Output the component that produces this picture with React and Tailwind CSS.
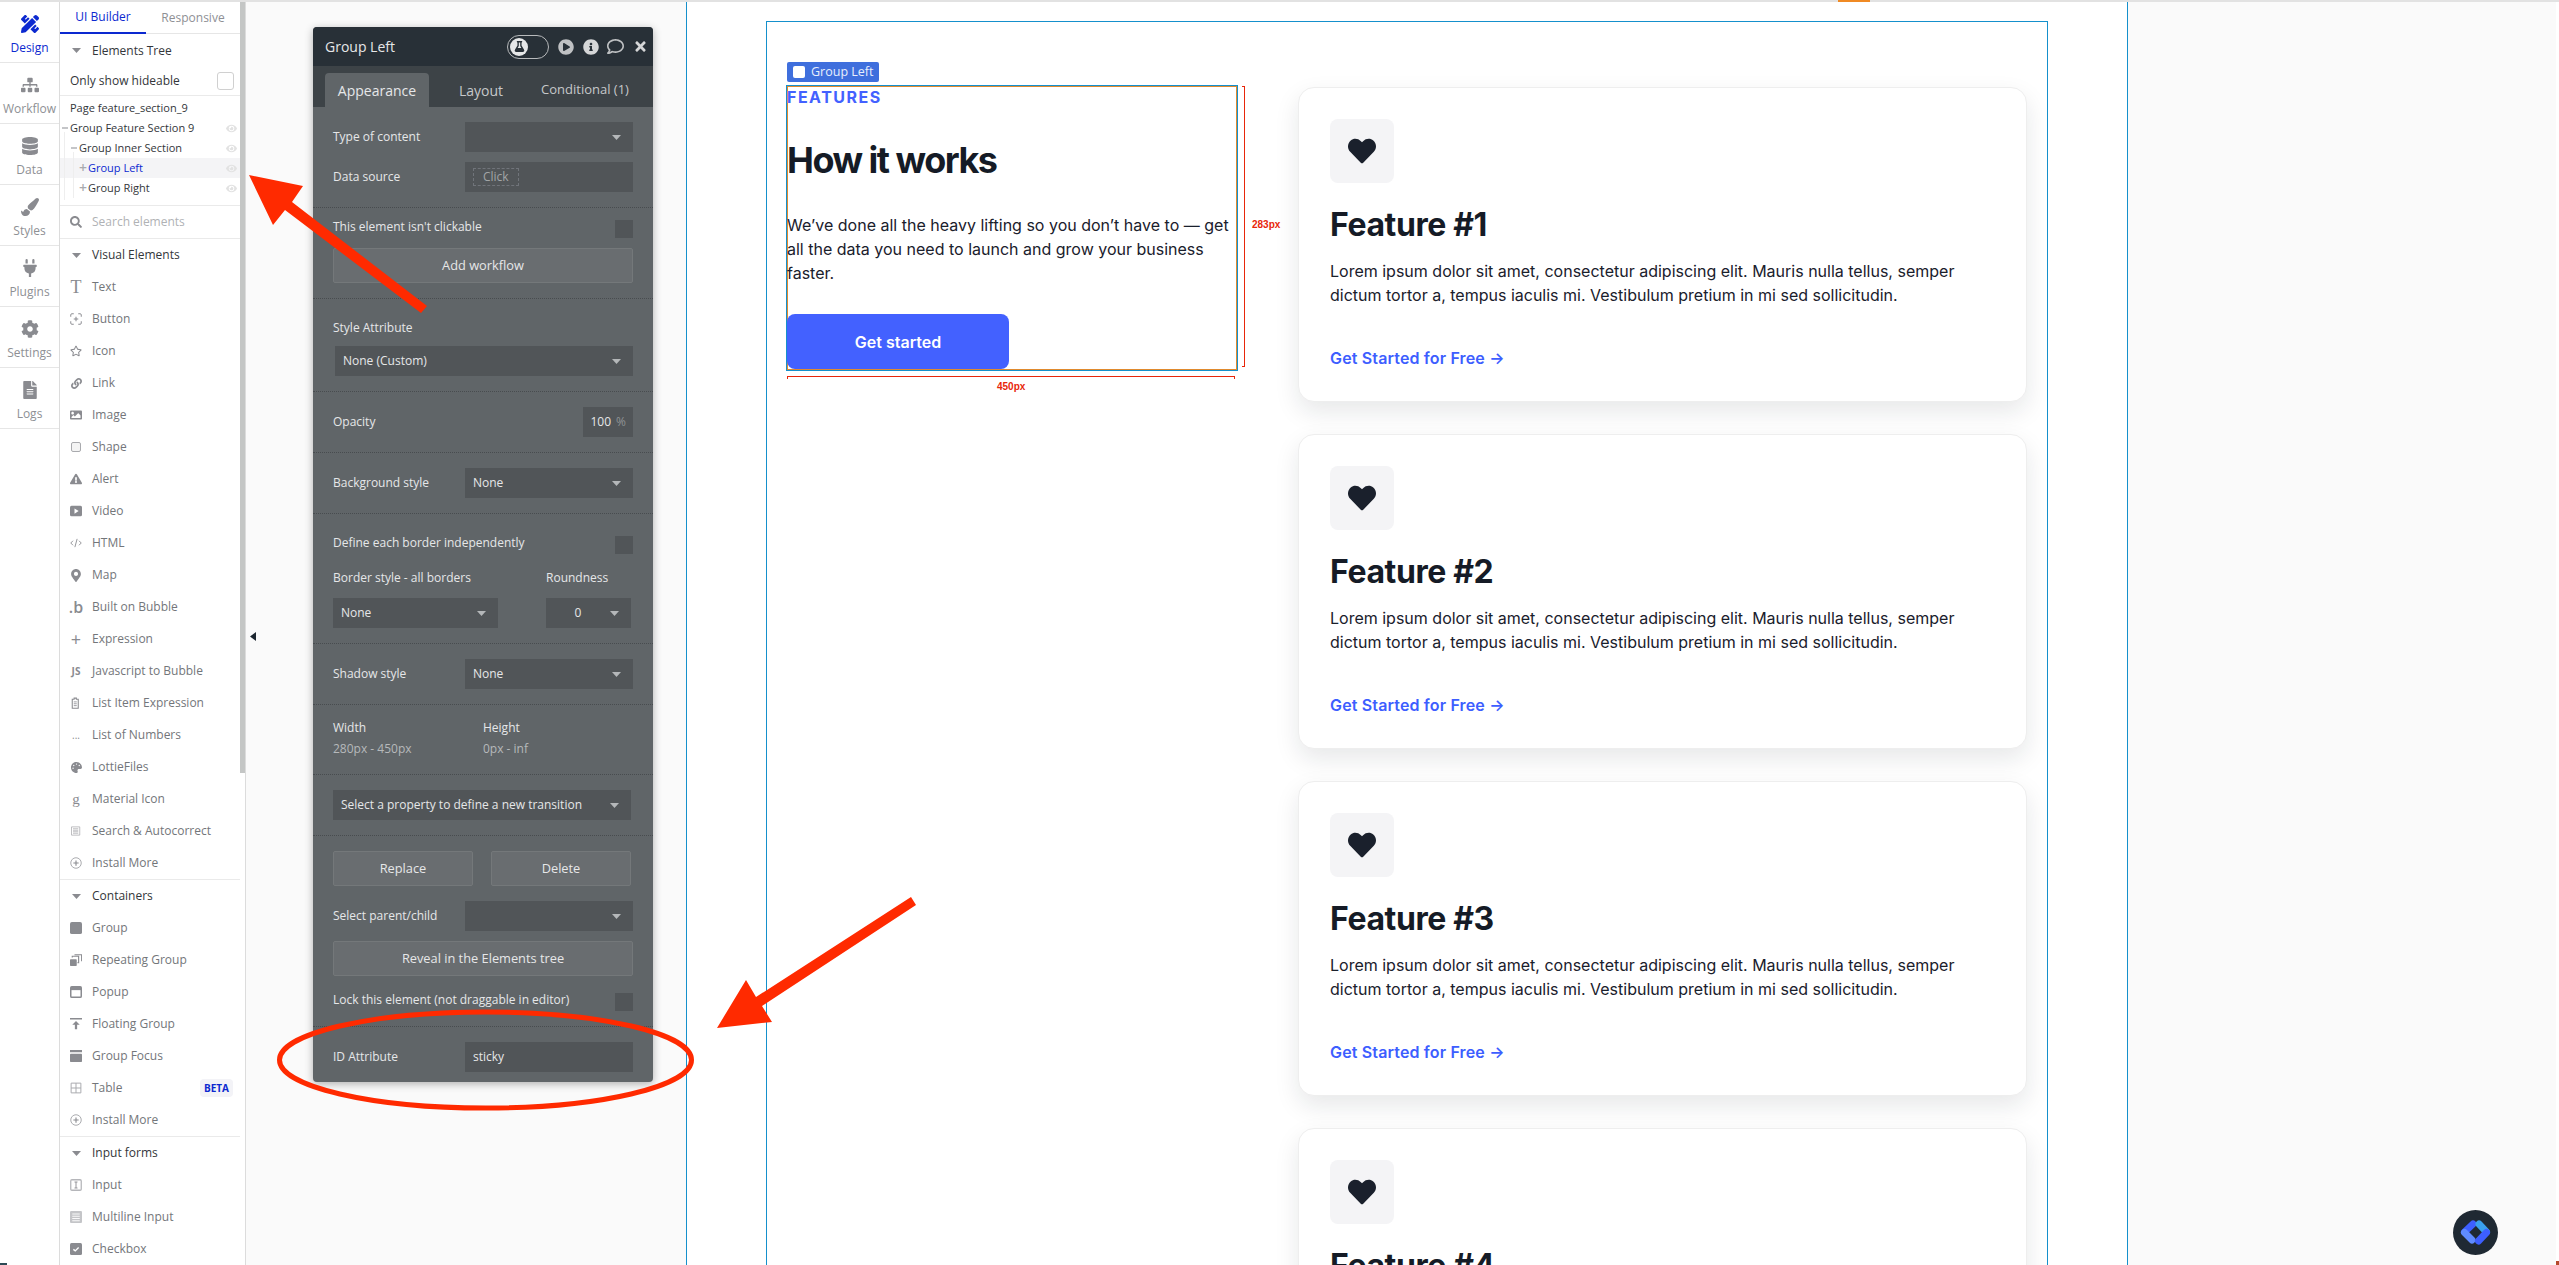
import {
  FaPencilRuler, FaSitemap, FaDatabase, FaPaintBrush, FaPlug, FaCog, FaFileAlt, FaHeart, FaEye, FaSearch,
  FaRegStar, FaLink, FaImage, FaExclamationTriangle, FaPalette, FaFlask, FaPlayCircle,
  FaInfoCircle, FaRegComment, FaTimes, FaMapMarkerAlt,
} from 'react-icons/fa';

const BLUE = 'text-[#0c29d0]';

// Small drawn icons for the element list (12px box)
const Svg = ({ children }) => (
  <svg width="12" height="12" viewBox="0 0 16 16" fill="#8a8b90">{children}</svg>
);
const IconBtn = () => (
  <Svg>
    <path d="M1 5V2.500Q1 1 2.500 1H5M11 1h2.500Q15 1 15 2.500V5M15 11v2.500q0 1.500-1.500 1.500H11M5 15H2.500Q1 15 1 13.500V11" fill="none" stroke="#8a8b90" strokeWidth="1.300" />
    <path d="M5 8h6M8 5v6" stroke="#8a8b90" strokeWidth="1.400" />
  </Svg>
);
const IconShape = () => <svg width="10" height="10" viewBox="0 0 10 10"><rect x="0.500" y="0.500" width="9" height="9" rx="1.500" fill="#f4f4f4" stroke="#a9aaae" /></svg>;
const IconVideo = () => <Svg><rect x="0" y="1" width="16" height="14" rx="2" /><path d="M6 4.500l5.500 3.500L6 11.500z" fill="#fff" /></Svg>;
const IconHtml = () => <Svg><path d="M4 5L1 8l3 3M12 5l3 3-3 3M9.500 2.500l-3 11" fill="none" stroke="#8a8b90" strokeWidth="1.200" /></Svg>;
const IconClip = () => <Svg><path d="M3 3h2.500V1.500h3V3H11v12H3z" fill="none" stroke="#8a8b90" strokeWidth="1.400" /><path d="M5 6.500h4M5 9h4M5 11.500h4" stroke="#8a8b90" strokeWidth="1.100" /></Svg>;
const IconList = () => <Svg><path d="M2 2.500h11v11H2zM4 5h7M4 7h7M4 9h7M4 11h7" fill="none" stroke="#a9aaae" strokeWidth="1" /></Svg>;
const IconInstall = () => <Svg><circle cx="8" cy="8" r="7" fill="none" stroke="#a9aaae" strokeWidth="1.300" /><path d="M4.500 8h7M8 4.500v7" stroke="#8a8b90" strokeWidth="1.500" /></Svg>;
const IconGroup = () => <Svg><rect width="16" height="16" x="0" y="0" rx="2.500" /></Svg>;
const IconRepeat = () => <Svg><rect x="0" y="7" width="9" height="9" rx="1" /><path d="M3 4.500V3h8.500v8.500H10M6 1h9.500v8.500" fill="none" stroke="#8a8b90" strokeWidth="1.500" /></Svg>;
const IconPopup = () => <Svg><rect x="1" y="1" width="14" height="14" rx="1.500" fill="none" stroke="#8a8b90" strokeWidth="2" /><rect x="1" y="1" width="14" height="4.500" /></Svg>;
const IconFloat = () => <Svg><rect x="0" y="0" width="16" height="2" /><path d="M8 4l5 5h-3.500v6h-3V9H3z" /></Svg>;
const IconFocus = () => <Svg><rect x="0" y="0" width="16" height="3" /><rect x="0" y="5" width="16" height="11" rx="1" /></Svg>;
const IconTable = () => <Svg><path d="M1.500 1.500h13v13h-13zM8 1.500v13M1.500 8h13" fill="none" stroke="#a9aaae" strokeWidth="1.300" /></Svg>;
const IconInput = () => <Svg><rect x="1" y="1" width="14" height="14" rx="1.500" fill="none" stroke="#b5b6ba" strokeWidth="1.700" /><path d="M6 4h4M6 12h4M8 4v8" stroke="#8a8b90" strokeWidth="1.200" /></Svg>;
const IconMulti = () => <Svg><rect x="0" y="0" width="16" height="16" rx="1.500" fill="#c4c5c8" /><path d="M3 4h10M3 7h10M3 10h10M3 13h10" stroke="#fff" strokeWidth="1.200" /></Svg>;
const IconCheckbox = () => <Svg><rect x="0" y="0" width="16" height="16" rx="2" /><path d="M4.500 8.500l2.500 2 4.500-4.500" fill="none" stroke="#fff" strokeWidth="1.800" /></Svg>;
const fa = (I, size = 12) => <I size={size} color="#8a8b90" />;
const glyph = (text, cls) => <span className={`text-[#8a8b90] leading-none ${cls}`}>{text}</span>;

const visualItems = [
  ['Text', glyph('T', "font-['Liberation_Serif',serif] text-[18px]")],
  ['Button', <IconBtn />],
  ['Icon', fa(FaRegStar)],
  ['Link', fa(FaLink, 11)],
  ['Image', fa(FaImage)],
  ['Shape', <IconShape />],
  ['Alert', fa(FaExclamationTriangle)],
  ['Video', <IconVideo />],
  ['HTML', <IconHtml />],
  ['Map', fa(FaMapMarkerAlt, 13)],
  ['Built on Bubble', glyph('.b', 'text-[16px] font-semibold')],
  ['Expression', glyph('+', 'text-[18px]')],
  ['Javascript to Bubble', glyph('JS', 'text-[10px] font-bold')],
  ['List Item Expression', <IconClip />],
  ['List of Numbers', glyph('...', 'text-[10px]')],
  ['LottieFiles', fa(FaPalette, 11)],
  ['Material Icon', glyph('g', "font-['Liberation_Serif',serif] text-[15px]")],
  ['Search & Autocorrect', <IconList />],
  ['Install More', <IconInstall />],
];
const containerItems = [
  ['Group', <IconGroup />],
  ['Repeating Group', <IconRepeat />],
  ['Popup', <IconPopup />],
  ['Floating Group', <IconFloat />],
  ['Group Focus', <IconFocus />],
  ['Table', <IconTable />],
  ['Install More', <IconInstall />],
];
const inputItems = [
  ['Input', <IconInput />],
  ['Multiline Input', <IconMulti />],
  ['Checkbox', <IconCheckbox />],
];

const railItems = [
  ['Design', FaPencilRuler, true],
  ['Workflow', FaSitemap],
  ['Data', FaDatabase],
  ['Styles', FaPaintBrush],
  ['Plugins', FaPlug],
  ['Settings', FaCog],
  ['Logs', FaFileAlt],
];

function Rail() {
  return (
    <nav className="w-[60px] shrink-0 border-r border-[#dcdcdc] bg-white">
      {railItems.map(([label, Icon, active]) => (
        <div key={label} className="h-[61px] border-b border-[#e6e6e6] flex flex-col items-center pt-[13px]">
          <Icon size={18} color={active ? '#0c29d0' : '#8a8b90'} />
          <span className={`mt-[6px] text-[12px] leading-[18px] ${active ? BLUE : 'text-[#8e9094]'}`}>{label}</span>
        </div>
      ))}
    </nav>
  );
}

const Caret = ({ color = '#8a8b90' }) => (
  <svg width="9" height="5" viewBox="0 0 9 5"><path d="M0 0h9L4.500 5z" fill={color} /></svg>
);

function SectionHead({ label, className = 'h-[32px]' }) {
  return (
    <div className={`flex items-center text-[12px] text-[#33363a] ${className}`}>
      <span className="w-[32px] pl-[12px] flex"><Caret /></span>
      {label}
    </div>
  );
}

function ItemRows({ items }) {
  return items.map(([label, icon]) => (
    <div key={label} className="h-[32px] flex items-center text-[12px] text-[#73767a]">
      <span className="w-[32px] pl-[10px] flex">
        <span className="w-[12px] flex justify-center">{icon}</span>
      </span>
      {label}
      {label === 'Table' && (
        <span className="ml-auto mr-[7px] rounded-[4px] bg-[#f3f3f7] px-[4px] h-[18px] flex items-center text-[10px] font-bold text-[#0c29d0]">BETA</span>
      )}
    </div>
  ));
}

function TreeRow({ label, pad, mark, active, eye = true }) {
  return (
    <div className={`h-[20px] flex items-center text-[11px] text-[#33363a] ${pad} ${active ? 'bg-[#f4f4f6]' : ''}`}>
      {mark === '-' && <span className="w-[6px] h-[2px] bg-[#c4c5c8] mr-[2px]" />}
      {mark === '+' && <span className="text-[#a9aaae] text-[14px] leading-none w-[9px] font-semibold">+</span>}
      <span className={active ? BLUE : ''}>{label}</span>
      {eye && <FaEye size={11} color="#e2e2e2" className="ml-auto mr-[3px]" />}
    </div>
  );
}

function ElementsPanel() {
  return (
    <aside className="w-[186px] shrink-0 flex border-r border-[#dcdcdc] bg-white">
      <div className="w-[180px] shrink-0">
        <div className="h-[32px] flex border-b border-[#e6e6e6] text-[12px]">
          <div className={`w-[86px] -mb-px flex items-center justify-center border-b-2 border-[#0c29d0] ${BLUE}`}>UI Builder</div>
          <div className="flex-1 flex items-center justify-center text-[#8e9094]">Responsive</div>
        </div>
        <SectionHead label="Elements Tree" className="h-[33px]" />
        <div className="h-[29px] flex items-center justify-between pl-[10px] pr-[6px] border-b border-[#eaeaea] text-[12px] text-[#33363a]">
          Only show hideable
          <span className="w-[17px] h-[18px] rounded-[3px] border border-[#d0d0d0]" />
        </div>
        <div className="relative pt-[2px] pb-[7px] border-b border-[#eaeaea]">
          <span className="absolute left-[4px] top-[36px] w-px h-[68px] bg-[#eeeeee]" />
          <span className="absolute left-[13px] top-[56px] w-px h-[46px] bg-[#eeeeee]" />
          <TreeRow label="Page feature_section_9" pad="pl-[10px]" eye={false} />
          <TreeRow label="Group Feature Section 9" pad="pl-[2px]" mark="-" />
          <TreeRow label="Group Inner Section" pad="pl-[11px]" mark="-" />
          <TreeRow label="Group Left" pad="pl-[19px]" mark="+" active />
          <TreeRow label="Group Right" pad="pl-[19px]" mark="+" />
        </div>
        <div className="h-[33px] flex items-center border-b border-[#eaeaea] text-[12px] text-[#b0b2b5]">
          <span className="w-[32px] pl-[10px]"><FaSearch size={12} color="#8a8b90" /></span>
          Search elements
        </div>
        <SectionHead label="Visual Elements" />
        <div className="border-b border-[#eaeaea]"><ItemRows items={visualItems} /></div>
        <SectionHead label="Containers" />
        <div className="border-b border-[#eaeaea]"><ItemRows items={containerItems} /></div>
        <SectionHead label="Input forms" />
        <ItemRows items={inputItems} />
      </div>
      <div className="w-[5px] h-[771px] bg-[#c4c6c5]" />
    </aside>
  );
}

function Select({ value, width = 'w-[168px]', center }) {
  return (
    <div className={`${width} h-[30px] bg-[#515558] flex items-center pl-2 pr-[12px] text-[12px] text-[#e6e7e8]`}>
      <span className={center ? 'flex-1 text-center pl-[8px] pr-[16px]' : 'flex-1'}>{value}</span>
      <Caret color="#b4b7b9" />
    </div>
  );
}

const Label = ({ children, className = '' }) => <span className={`block text-[12px] leading-[18px] text-[#e6e7e8] ${className}`}>{children}</span>;

const Section = ({ className = '', children }) => (
  <div className={`px-[20px] border-b border-dotted border-[#484c4f] ${className}`}>{children}</div>
);

const Row = ({ label, children, className = '', labelClass }) => (
  <div className={`flex items-center justify-between ${className}`}>
    <Label className={labelClass}>{label}</Label>
    {children}
  </div>
);

const Check = () => <span className="w-[18px] h-[18px] bg-[#515558]" />;

const PanelButton = ({ children, className = '' }) => (
  <div className={`h-[35px] flex items-center justify-center rounded-[2px] border border-[#74787a] bg-[#696d70] text-[12.800px] text-[#e6e7e8] ${className}`}>
    {children}
  </div>
);

function PropertyPanel() {
  return (
    <section className="mt-[25px] ml-[67px] w-[340px] h-[1055px] shrink-0 rounded-[4px] bg-[#606568] shadow-[0_2px_8px_rgba(0,0,0,0.3)] overflow-hidden">
      <header className="h-[39px] bg-[#283037] flex items-center pl-[12px] pr-[5px] text-[14px] text-[#e6e7e8]">
        <span className="flex-1">Group Left</span>
        <span className="w-[42px] h-[24px] rounded-full border border-[#b8babc] flex items-center pl-[2px] mr-[9px]">
          <span className="w-[18px] h-[18px] rounded-full bg-[#e6e7e8] flex items-center justify-center"><FaFlask size={11} color="#283037" /></span>
        </span>
        <FaPlayCircle size={16} color="#bfc1c3" className="mr-[9px]" />
        <FaInfoCircle size={16} color="#d5d6d7" className="mr-[8px]" />
        <FaRegComment size={17} color="#bfc1c3" className="mr-[9px]" />
        <FaTimes size={15} color="#d5d6d7" />
      </header>
      <div className="h-[41px] bg-[#3d4347] flex items-end pl-[12px] text-[14px]">
        <div className="w-[104px] h-[34px] bg-[#606568] rounded-t-[4px] flex items-center justify-center text-[#e6e7e8]">Appearance</div>
        <div className="w-[104px] h-[34px] flex items-center justify-center text-[#c6c8ca]">Layout</div>
        <div className="flex-1 h-[34px] flex items-center justify-center pr-[16px] text-[13px] text-[#c6c8ca]">Conditional (1)</div>
      </div>

      <Section className="pt-[15px] pb-[15px]">
        <Row label="Type of content"><Select /></Row>
        <Row label="Data source" className="mt-[10px]">
          <div className="w-[168px] h-[30px] bg-[#515558] flex items-center pl-2">
            <span className="h-[18px] px-[9px] flex items-center border border-dashed border-[#70747a] text-[12px] text-[#a2a5a7]">Click</span>
          </div>
        </Row>
      </Section>
      <Section className="pt-[12px] pb-[15px]">
        <Row label="This element isn't clickable" labelClass="-translate-y-[2px]"><Check /></Row>
        <PanelButton className="mt-[10px]">Add workflow</PanelButton>
      </Section>
      <Section className="pt-[20px] pb-[15px]">
        <Label>Style Attribute</Label>
        <div className="mt-[9px] ml-[2px]"><Select value="None (Custom)" width="w-[298px]" /></div>
      </Section>
      <Section className="py-[15px]">
        <Row label="Opacity">
          <div className="w-[50px] h-[30px] bg-[#515558] flex items-center justify-end pr-[7px] text-[12px] text-[#e6e7e8]">
            100<span className="ml-[5px] text-[#8f9395]">%</span>
          </div>
        </Row>
      </Section>
      <Section className="py-[15px]">
        <Row label="Background style"><Select value="None" /></Row>
      </Section>
      <Section className="pt-[22px] pb-[15px]">
        <Row label="Define each border independently" labelClass="-translate-y-[2px]"><Check /></Row>
        <div className="mt-[15px] flex">
          <div className="w-[213px]"><Label>Border style - all borders</Label></div>
          <Label>Roundness</Label>
        </div>
        <div className="mt-[11px] flex">
          <Select value="None" width="w-[165px]" />
          <div className="ml-[48px]"><Select value="0" width="w-[85px]" center /></div>
        </div>
      </Section>
      <Section className="py-[15px]">
        <Row label="Shadow style"><Select value="None" /></Row>
      </Section>
      <Section className="pt-[14px] pb-[16px]">
        <div className="flex">
          <div className="w-[150px] flex flex-col gap-[3px]">
            <Label>Width</Label>
            <span className="text-[12px] leading-[18px] text-[#b6b9bb]">280px - 450px</span>
          </div>
          <div className="flex flex-col gap-[3px]">
            <Label>Height</Label>
            <span className="text-[12px] leading-[18px] text-[#b6b9bb]">0px - inf</span>
          </div>
        </div>
      </Section>
      <Section className="py-[15px]">
        <Select value="Select a property to define a new transition" width="w-[298px]" />
      </Section>
      <Section className="pt-[15px] pb-[15px]">
        <div className="flex justify-between w-[298px]">
          <PanelButton className="w-[140px]">Replace</PanelButton>
          <PanelButton className="w-[140px]">Delete</PanelButton>
        </div>
        <Row label="Select parent/child" className="mt-[15px]"><Select /></Row>
        <PanelButton className="mt-[10px]">Reveal in the Elements tree</PanelButton>
        <Row label="Lock this element (not draggable in editor)" className="mt-[17px]" labelClass="-translate-y-[2px]"><Check /></Row>
      </Section>
      <div className="px-[20px] pt-[15px]">
        <Row label="ID Attribute">
          <div className="w-[168px] h-[30px] bg-[#515558] flex items-center pl-2 text-[12px] text-[#e6e7e8]">sticky</div>
        </Row>
      </div>
    </section>
  );
}

function GroupLeft() {
  return (
    <div className="relative mt-[63px] w-[452px] h-[286px] shrink-0 border border-[#1590cc] shadow-[inset_0_0_0_1px_#e08a2e] font-['Inter',sans-serif]">
      {/* editor label above the selected group */}
      <div className="absolute left-0 -top-[24px] h-[20px] w-[92px] rounded-[2px] bg-[#3f6fdd] flex items-center pl-[6px] gap-[6px] text-[12.500px] text-[#e8eefc] font-['Open_Sans',sans-serif]">
        <span className="w-[12px] h-[12px] rounded-[2px] bg-white" />
        Group Left
      </div>
      <div className="-mt-px text-[16px] leading-[24px] font-bold tracking-[1.500px] text-[#4361ff]">FEATURES</div>
      <h1 className="mt-[27px] text-[36px] leading-[48px] font-bold tracking-[-1.500px] text-[#151b26]">How it works</h1>
      <p className="mt-[29px] text-[16px] leading-[24px] text-[#1a202c]">
        We’ve done all the heavy lifting so you don’t have to — get all the data you need to launch and grow your business faster.
      </p>
      <div className="mt-[29px] w-[222px] h-[55px] rounded-[8px] bg-[#4361ff] flex items-center justify-center text-[16px] font-semibold text-white">Get started</div>
      {/* size annotations */}
      <div className="absolute left-[455px] top-0 h-[281px] w-[3px] border border-l-0 border-[#e8260a]" />
      <div className="absolute left-[465px] top-[132px] text-[10px] leading-[14px] font-bold text-[#e8260a] font-['Liberation_Sans',sans-serif]">283px</div>
      <div className="absolute left-0 top-[290px] h-[3px] w-[448px] border border-t-0 border-[#e8260a] rotate-180" />
      <div className="absolute left-[210px] top-[294px] text-[10px] leading-[14px] font-bold text-[#e8260a] font-['Liberation_Sans',sans-serif]">450px</div>
    </div>
  );
}

function FeatureCard({ n }) {
  return (
    <article className="w-[729px] h-[315px] shrink-0 rounded-[16px] border border-[#eeeeee] bg-white p-[31px] shadow-[0_10px_24px_rgba(20,30,40,0.1)]">
      <div className="w-[64px] h-[64px] rounded-[8px] bg-[#f4f4f6] flex items-center justify-center">
        <FaHeart size={28} color="#1a202c" />
      </div>
      <h2 className="mt-[22px] text-[32px] leading-[40px] font-bold tracking-[-0.400px] text-[#151b26]">Feature #{n}</h2>
      <p className="mt-[14px] text-[16px] leading-[24px] text-[#1a202c]">
        Lorem ipsum dolor sit amet, consectetur adipiscing elit. Mauris nulla tellus, semper dictum tortor a, tempus iaculis mi. Vestibulum pretium in mi sed sollicitudin.
      </p>
      <div className="mt-[39px] text-[16px] leading-[24px] font-semibold tracking-[0.150px] text-[#3d5eff]">Get Started for Free →</div>
    </article>
  );
}

function PageCanvas() {
  return (
    <main className="ml-[33px] w-[1442px] shrink-0 border-x border-[#1590cc] bg-white">
      <div className="mt-[19px] ml-[79px] w-[1282px] h-[1300px] border border-b-0 border-[#1590cc] flex items-start pl-[19px]">
        <GroupLeft />
        <div className="ml-[60px] mt-[65px] flex flex-col gap-[32px] font-['Inter',sans-serif]">
          {[1, 2, 3, 4].map((n) => <FeatureCard key={n} n={n} />)}
        </div>
      </div>
    </main>
  );
}

export default function App() {
  return (
    <div className="relative w-[2559px] h-[1265px] overflow-hidden flex flex-col bg-white font-['Open_Sans',sans-serif]">
      <div className="h-[2px] shrink-0 bg-[#e2e2e2]">
        <div className="ml-[1838px] w-[32px] h-full bg-[#f08a24]" />
      </div>
      <div className="flex-1 min-h-0 flex pr-[3px]">
        <Rail />
        <ElementsPanel />
        <div className="relative flex-1 min-w-0 flex bg-[#fafafa]">
          <PropertyPanel />
          <PageCanvas />
          {/* collapse handle */}
          <svg className="absolute left-[4px] top-[630px]" width="6" height="9" viewBox="0 0 6 9"><path d="M6 0v9L0 4.500z" fill="#1c2630" /></svg>
          {/* floating help badge */}
          <svg className="absolute left-[2207px] top-[1208px]" width="45" height="45" viewBox="0 0 45 45">
            <circle cx="22.500" cy="22.500" r="22.500" fill="#1f2933" />
            <path d="M20 14L11.500 22" stroke="#3d5fff" strokeWidth="7" strokeLinecap="round" />
            <path d="M11.500 22.500L19 30" stroke="#5f8bff" strokeWidth="7" strokeLinecap="round" />
            <path d="M26 14L33.500 22" stroke="#3aa0ee" strokeWidth="7" strokeLinecap="round" />
            <path d="M33.500 22.500L25.500 31" stroke="#3d5fff" strokeWidth="7" strokeLinecap="round" />
          </svg>
        </div>
      </div>
      {/* window corners showing the desktop behind */}
      <span className="absolute left-0 bottom-0 w-[7px] h-[2px] bg-[#2c4a55]" />
      <span className="absolute right-0 bottom-0 w-[3px] h-[4px] bg-[#b5492c]" />
      {/* red call-outs drawn over the screenshot */}
      <svg className="absolute inset-0 pointer-events-none" width="2559" height="1265" viewBox="0 0 2559 1265">
        <polygon points="249,175 303,186 292,202 427,306 421,313 285,210 273,225" fill="#ff2a00" />
        <polygon points="717,1028 746,980 756,997 911,897 916,905 762,1006 772,1022" fill="#ff2a00" />
        <ellipse cx="485.500" cy="1060" rx="206" ry="48" fill="none" stroke="#ff2a00" strokeWidth="5" />
      </svg>
    </div>
  );
}
